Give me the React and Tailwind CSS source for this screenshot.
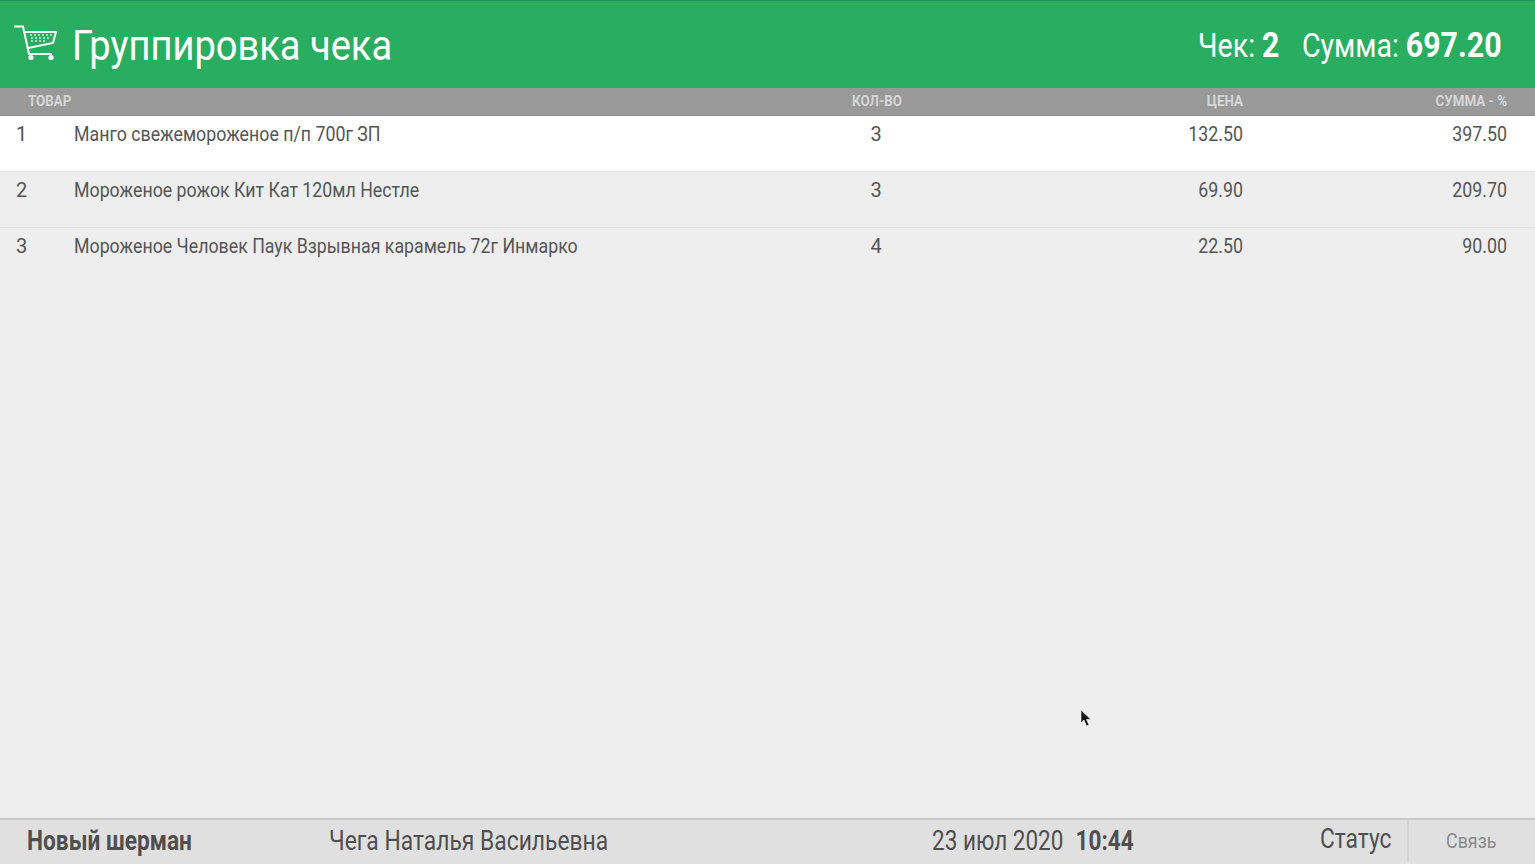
const rows = [
  { n: 1, name: "Манго свежемороженое п/п 700г ЗП", qty: 3, price: "132.50", sum: "397.50" },
  { n: 2, name: "Мороженое рожок Кит Кат 120мл Нестле", qty: 3, price: "69.90", sum: "209.70" },
  { n: 3, name: "Мороженое Человек Паук Взрывная карамель 72г Инмарко", qty: 4, price: "22.50", sum: "90.00" },
];

function CartIcon() {
  return (
    <svg width="44" height="36" viewBox="0 0 44 36" fill="none" stroke="#fff" className="mb-[4px] shrink-0">
      <path d="M0 1.5H9L15 29H38" strokeWidth="2" />
      <path d="M11 7H42L39 18L14 23" strokeWidth="2" />
      <path d="M16 10h2M20 10h2M24 10h2M28 10h2M32 10h2M36 10h2M17 13h2M21 13h2M25 13h2M29 13h2M33 13h2M17 16h2M21 16h2M25 16h2M29 16h2" strokeWidth="1.6" strokeOpacity="0.8" />
      <circle cx="17" cy="32.5" r="2.6" fill="#fff" stroke="none" />
      <circle cx="37" cy="32.5" r="2.6" fill="#fff" stroke="none" />
    </svg>
  );
}

function Cursor() {
  return (
    <svg width="12" height="19" viewBox="0 0 12 19" className="absolute left-[1080px] top-[709px]">
      <path d="M1 1V14L4 11L6.5 17L9 16L6.5 10.5H11Z" fill="#111" stroke="#fff" strokeWidth="0.6" />
    </svg>
  );
}

export default function App() {
  return (
    <div className="relative flex h-[864px] w-[1535px] flex-col overflow-hidden bg-[#eeeeee] font-['Roboto',sans-serif] text-[#555]">
      <header className="flex h-[88px] shrink-0 items-center justify-between border-t border-[#1f9155] bg-[#29ae61] pl-[14px] pr-[33px] text-white">
        <div className="flex items-center gap-[14px]">
          <CartIcon />
          <h1 className="mt-[3px] origin-left scale-x-[.906] whitespace-nowrap text-[42px] leading-none">Группировка чека</h1>
        </div>
        <div className="mt-[2px] flex origin-right scale-x-[.866] items-baseline whitespace-nowrap text-[33px] leading-none">
          <span>Чек:</span>
          <b className="ml-[8px] text-[35px] font-bold">2</b>
          <span className="ml-[26px]">Сумма:</span>
          <b className="ml-[8px] text-[35px] font-bold">697.20</b>
        </div>
      </header>

      <div className="grid h-[28px] shrink-0 grid-cols-[1fr_110px_312px_264px] items-center bg-[#999999] pb-[2px] pr-[28px] text-[15px] font-bold text-[#d6d6d6] shadow-[inset_0_-1px_0_#8a8a8a]">
        <span className="origin-left translate-x-[28px] scale-x-[.89]">ТОВАР</span>
        <span className="translate-x-[1px] scale-x-[.89] text-center">КОЛ-ВО</span>
        <span className="origin-right scale-x-[.89] text-right">ЦЕНА</span>
        <span className="origin-right scale-x-[.89] text-right">СУММА - %</span>
      </div>

      <main className="flex-1">
        {rows.map((row, i) => (
          <div
            key={row.n}
            className={`grid h-[56px] grid-cols-[74px_1fr_110px_312px_264px] pr-[28px] pt-[5px] text-[20px] leading-[26px] ${i === 0 ? "bg-white" : ""} ${i < 2 ? "border-b border-[#e2e2e2]" : ""}`}
          >
            <span className="pl-[16px]">{row.n}</span>
            <span className="origin-left scale-x-[.888] whitespace-nowrap">{row.name}</span>
            <span className="text-center">{row.qty}</span>
            <span className="origin-right scale-x-[.89] text-right">{row.price}</span>
            <span className="origin-right scale-x-[.89] text-right">{row.sum}</span>
          </div>
        ))}
      </main>

      <footer className="flex h-[46px] shrink-0 items-center border-t-2 border-[#c9c9c9] bg-[#e0e0e0] pb-[2px] text-[27px] text-[#4f4f4f]">
        <b className="ml-[27px] w-[302px] origin-left scale-x-[.84] whitespace-nowrap font-bold">Новый шерман</b>
        <span className="w-[603px] origin-left scale-x-[.846] whitespace-nowrap">Чега Наталья Васильевна</span>
        <span className="origin-left scale-x-[.834] whitespace-nowrap">
          23 июл 2020 <b className="ml-[8px] font-bold">10:44</b>
        </span>
        <span className="ml-auto mb-[4px] origin-right scale-x-[.845] pr-[18px]">Статус</span>
        <span className="flex h-full w-[128px] items-center justify-center border-l-2 border-[#d4d4d4] text-[20px] text-[#8a8a8a]">
          <span className="-translate-x-[1px] scale-x-[.89]">Связь</span>
        </span>
      </footer>

      <Cursor />
    </div>
  );
}
